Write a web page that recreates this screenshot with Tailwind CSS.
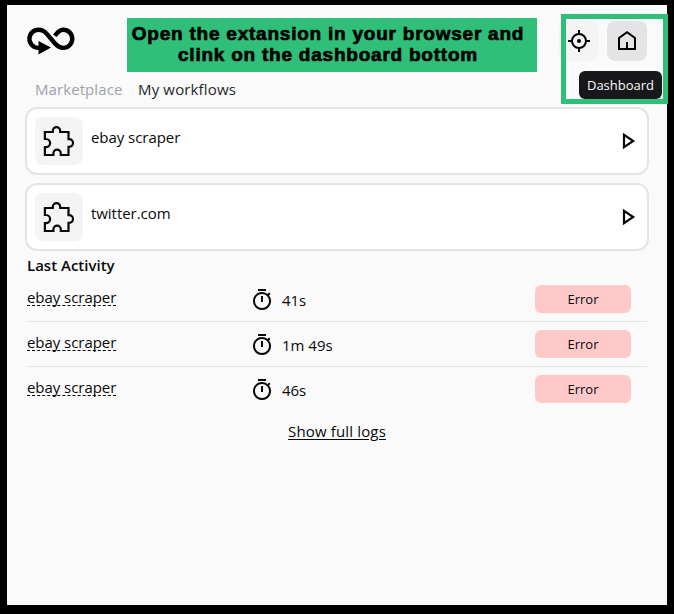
<!DOCTYPE html>
<html lang="en">
<head>
<meta charset="utf-8">
<title>Workflows</title>
<script src="https://cdn.jsdelivr.net/npm/@tailwindcss/browser@4"></script>
</head>
<body class="bg-black w-[674px] h-[614px] overflow-hidden pl-[7px] pt-[5px] font-['Open_Sans','Noto_Sans',sans-serif] text-[15px] leading-6 text-[#09090b]">
<svg class="hidden">
  <symbol id="puzzle" viewBox="0 0 48 48"><path d="M9.9 15H17.8V13.8A3.7 3.7 0 0 1 25.2 13.8V15H33.5V22.2H34.2A3.8 3.8 0 0 1 34.2 29.8H33.5V38H25.8V36.4A3.7 3.7 0 0 0 18.4 36.4V38H9.9V30.2H11A4.1 4.1 0 0 0 11 22H9.9Z" fill="none" stroke="currentColor" stroke-width="2.2"/></symbol>
  <symbol id="play" viewBox="0 0 24 24"><path d="M8 5.8V18.2L17.2 12Z" fill="none" stroke="currentColor" stroke-width="2.2"/></symbol>
  <symbol id="timer" viewBox="0 0 24 24"><path d="M8 1h8v2H8zM19.03 7.39l1.42-1.42c-.43-.51-.9-.99-1.41-1.41l-1.42 1.42A8.962 8.962 0 0 0 12 4c-4.97 0-9 4.03-9 9s4.02 9 9 9a8.994 8.994 0 0 0 7.03-14.61zM13 14h-2V8h2v6zm-1 6c-3.87 0-7-3.13-7-7s3.13-7 7-7 7 3.13 7 7-3.13 7-7 7z" fill="currentColor"/></symbol>
</svg>
<main class="relative w-[660px] h-[600px] bg-[#fafafa] px-[18px]">
  <header class="h-[72px] pt-4 flex justify-between">
    <svg class="w-[50px] h-[30px] mt-[5px] ml-px" viewBox="0 0 50 30"><path d="M28.8 9.8C31.5 6 33.5 3.7 37.2 3.7A9.1 9.1 0 0 1 37.2 21.9C33.5 21.9 31.3 20.2 28.6 17L20.8 7.8C18.2 4.8 16 3.7 12.5 3.7A9.1 9.1 0 0 0 12.5 21.9H14" fill="none" stroke="#000" stroke-width="4.4"/><path d="M12.5 15V28.6L25 21.4Z"/></svg>
    <div class="flex gap-2 mr-[2px]">
      <button class="size-10 rounded-lg bg-[#f4f4f5] grid place-items-center"><svg class="size-6" viewBox="0 0 24 24" fill="none" stroke="#000" stroke-width="2"><circle cx="12" cy="12" r="7"/><path d="M12 1v4M12 19v4M1 12h4M19 12h4"/><circle cx="12" cy="12" r="2" fill="#000" stroke="none"/></svg></button>
      <button class="size-10 rounded-lg bg-[#e4e4e7] grid place-items-center"><svg class="size-6" viewBox="0 0 24 24" fill="none" stroke="#000" stroke-width="2"><path d="M4 20V9L12 3.2 20 9V20ZM12 20v-7"/></svg></button>
    </div>
  </header>
  <nav class="h-[30px] pl-[10px] flex gap-4 whitespace-nowrap"><span class="w-[87px] text-[#a1a1aa] tracking-[0.08px]">Marketplace</span><span class="text-[#27272a] tracking-[0.15px]">My workflows</span></nav>
  <section class="flex flex-col gap-2">
    <article class="h-[68px] rounded-xl border-2 border-[#e4e4e4] bg-white px-2 flex items-center"><div class="size-12 rounded-lg bg-[#f4f4f4]"><svg class="size-12"><use href="#puzzle"/></svg></div><span class="ml-2 mb-[9px] tracking-[-0.05px]">ebay scraper</span><svg class="size-6 ml-auto -mr-px"><use href="#play"/></svg></article>
    <article class="h-[68px] rounded-xl border-2 border-[#e4e4e4] bg-white px-2 flex items-center"><div class="size-12 rounded-lg bg-[#f4f4f4]"><svg class="size-12"><use href="#puzzle"/></svg></div><span class="ml-2 mb-[9px] tracking-[-0.05px]">twitter.com</span><svg class="size-6 ml-auto -mr-px"><use href="#play"/></svg></article>
  </section>
  <section class="px-[2px] pt-[2px]">
    <h2 class="h-6 font-semibold text-[15px]">Last Activity</h2>
    <div class="h-[45px] border-b border-[#e4e4e7] grid grid-cols-[223px_285px_96px]"><div class="pt-[11px]"><span class="block w-fit h-[18px] leading-[19px] border-b border-dashed border-black tracking-[-0.05px]">ebay scraper</span></div><div class="flex pt-[11px] gap-2"><svg class="size-6"><use href="#timer"/></svg><span class="tracking-[-0.05px]">41s</span></div><span class="mt-2 h-7 rounded-md bg-[#ffc9c9] text-center text-[13px] leading-7">Error</span></div>
    <div class="h-[45px] border-b border-[#e4e4e7] grid grid-cols-[223px_285px_96px]"><div class="pt-[11px]"><span class="block w-fit h-[18px] leading-[19px] border-b border-dashed border-black tracking-[-0.05px]">ebay scraper</span></div><div class="flex pt-[11px] gap-2"><svg class="size-6"><use href="#timer"/></svg><span>1m 49s</span></div><span class="mt-2 h-7 rounded-md bg-[#ffc9c9] text-center text-[13px] leading-7">Error</span></div>
    <div class="h-[45px] grid grid-cols-[223px_285px_96px]"><div class="pt-[11px]"><span class="block w-fit h-[18px] leading-[19px] border-b border-dashed border-black tracking-[-0.05px]">ebay scraper</span></div><div class="flex pt-[11px] gap-2"><svg class="size-6"><use href="#timer"/></svg><span class="tracking-[-0.05px]">46s</span></div><span class="mt-2 h-7 rounded-md bg-[#ffc9c9] text-center text-[13px] leading-7">Error</span></div>
    <div class="pt-[7px] text-center"><a class="underline underline-offset-2 tracking-[0.15px]">Show full logs</a></div>
  </section>
  <div class="absolute left-[120px] top-[13px] w-[410px] h-[54px] bg-[#2fbf78] pt-[5px] pr-[8px] text-center whitespace-nowrap font-['Liberation_Sans',sans-serif] font-black text-[19px] leading-[21px] tracking-[0.77px] text-black [-webkit-text-stroke:0.7px_black]">Open the extansion in your browser and<br>clink on the dashboard bottom</div>
  <div class="absolute left-[572px] top-[66px] w-[83px] h-7 rounded-md bg-[#18181b] text-[#fafafa] text-center text-[13px] leading-7">Dashboard</div>
  <div class="absolute left-[554px] top-[9px] w-[107px] h-[90px] border-[5px] border-[#2fbf78]"></div>
</main>
</body>
</html>
